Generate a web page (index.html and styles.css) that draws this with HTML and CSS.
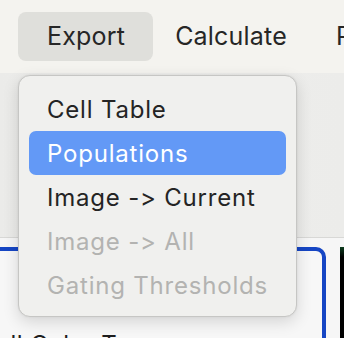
FILE: index.html
```html
<!DOCTYPE html>
<html>
<head>
<meta charset="utf-8">
<link rel="stylesheet" href="styles.css">
</head>
<body>
<div class="app">
  <div class="menubar">
    <div class="mitem active">Export</div>
    <div class="mitem calc">Calculate</div>
    <div class="mitem">Plot</div>
  </div>
  <div class="toolbar"></div>
  <div class="content">
    <div class="panel">
      <div class="label">Cell Color Type</div>
    </div>
    <div class="image"></div>
  </div>
  <div class="dropdown">
    <div class="ditem">Cell Table</div>
    <div class="ditem selected">Populations</div>
    <div class="ditem">Image -&gt; Current</div>
    <div class="ditem disabled">Image -&gt; All</div>
    <div class="ditem disabled">Gating Thresholds</div>
  </div>
</div>
</body>
</html>
```
FILE: styles.css
```css
html, body {
  margin: 0;
  padding: 0;
}
body {
  width: 344px;
  height: 338px;
  overflow: hidden;
  background: #f6f6f6;
  font-family: Inter, "Liberation Sans", sans-serif;
  font-feature-settings: "calt" 0, "liga" 0;
  font-variant-ligatures: none;
}
.app {
  position: relative;
  width: 344px;
  height: 338px;
  overflow: hidden;
}
.menubar {
  height: 73px;
  background: #f4f3ef;
  display: flex;
  align-items: center;
  padding-left: 18px;
  box-sizing: border-box;
  white-space: nowrap;
}
.mitem {
  height: 49px;
  display: flex;
  align-items: center;
  padding: 0 22px;
  font-size: 25px;
  letter-spacing: 0.2px;
  color: #262626;
  border-radius: 8px;
  margin-top: -1px;
}
.mitem.active {
  background: #dfdfdb;
  padding: 0 28px 0 29px;
}
.mitem.calc {
  padding: 0 27px 0 22px;
}
.toolbar {
  height: 164px;
  background: linear-gradient(90deg, #ebebe9 0%, #eeeeec 50%, #ececea 100%);
  border-bottom: 1px solid #d8d8d6;
}
.content {
  display: flex;
  padding-top: 9px;
  gap: 14px;
}
.panel {
  margin-left: -20px;
  width: 346px;
  height: 120px;
  box-sizing: border-box;
  border: 4px solid #1646c4;
  border-bottom: none;
  border-radius: 0 10px 0 0;
  background: #f7f7f7;
  flex: none;
  position: relative;
}
.label {
  position: absolute;
  left: -6px;
  top: 79px;
  font-size: 24px;
  letter-spacing: 0.5px;
  color: #1e1e1e;
  white-space: nowrap;
}
.image {
  flex: none;
  width: 10px;
  height: 120px;
  background: linear-gradient(180deg, #0c3d1e 0px, #000 10px);
}
.dropdown {
  position: absolute;
  left: 18px;
  top: 75px;
  width: 279px;
  height: 242px;
  box-sizing: border-box;
  padding: 11px 10px;
  background: #f0f0ee;
  border: 1px solid #c6c6c4;
  border-radius: 12px;
  box-shadow: 0 5px 16px rgba(0,0,0,0.14), 0 0 2px rgba(0,0,0,0.08);
}
.ditem {
  height: 44px;
  display: flex;
  align-items: center;
  padding-left: 18px;
  font-size: 24px;
  letter-spacing: 0.8px;
  color: #242424;
  border-radius: 7px;
  white-space: nowrap;
}
.ditem.selected {
  background: #6399f6;
  color: #ffffff;
}
.ditem.disabled {
  color: #b3b3b1;
}
```
